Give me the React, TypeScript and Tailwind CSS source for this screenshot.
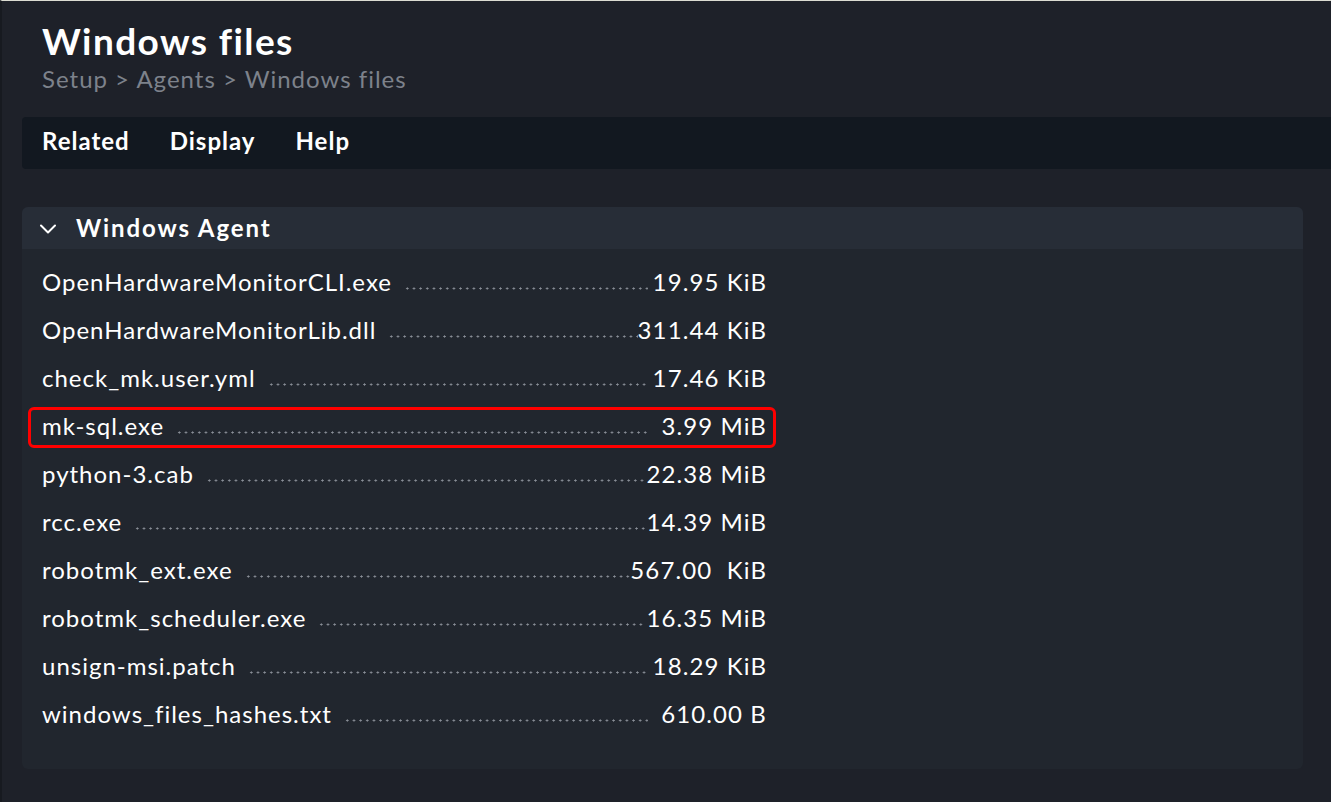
interface AgentFile {
  name: string;
  size: string;
  marked?: boolean;
}

const files: AgentFile[] = [
  { name: "OpenHardwareMonitorCLI.exe", size: "19.95 KiB" },
  { name: "OpenHardwareMonitorLib.dll", size: "311.44 KiB" },
  { name: "check_mk.user.yml", size: "17.46 KiB" },
  { name: "mk-sql.exe", size: "3.99 MiB", marked: true },
  { name: "python-3.cab", size: "22.38 MiB" },
  { name: "rcc.exe", size: "14.39 MiB" },
  { name: "robotmk_ext.exe", size: "567.00\u00a0 KiB" },
  { name: "robotmk_scheduler.exe", size: "16.35 MiB" },
  { name: "unsign-msi.patch", size: "18.29 KiB" },
  { name: "windows_files_hashes.txt", size: "610.00 B" },
];

function FileRow({ file }: { file: AgentFile }) {
  return (
    <div className="relative flex h-12 items-center">
      <span className="whitespace-nowrap">{file.name}</span>
      <span className="ml-3 h-[3px] flex-1 self-center translate-y-[6px] bg-[radial-gradient(circle,#8b9099_0.9px,transparent_1.2px)] bg-[length:6.67px_3px] bg-repeat-x" />
      <span className="min-w-[119px] whitespace-pre text-right tracking-[1.1px]">{file.size}</span>
      {file.marked && (
        <span className="pointer-events-none absolute -left-[14px] -right-[9px] top-[5px] bottom-[2px] rounded-[6px] border-[3px] border-[#ff0000]" />
      )}
    </div>
  );
}

export default function App() {
  return (
    <div className="min-h-[802px] border-t border-l-2 border-t-[#dcdcd2] border-l-[#171a20] bg-[#1e2129] font-['Lato','Liberation_Sans',sans-serif] text-white">
      <div className="pl-[20px] pt-[18px]">
        <div className="px-5">
          <h1 className="text-[37px] font-bold leading-[44px] tracking-[1.4px]">Windows files</h1>
          <div className="text-[24px] leading-[32px] tracking-[1px] text-[#7d828b]">
            Setup &gt; Agents &gt; Windows files
          </div>
        </div>

        <div className="mt-[22px] flex h-[52px] items-center gap-[40px] rounded-l-[4px] bg-[#121820] px-5 pb-1 text-[24px] font-bold tracking-[1px]">
          <span>Related</span>
          <span>Display</span>
          <span>Help</span>
        </div>

        <div className="mr-[28px] mt-[38px] rounded-[6px] bg-[#21262e] pb-[31px]">
          <div className="flex h-[42px] items-center rounded-t-[6px] bg-[#272d37] pl-[18px] text-[24px] font-bold tracking-[1.9px]">
            <svg width="16" height="10" viewBox="0 0 16 10" fill="none" className="mt-[2px]">
              <path d="M1 1.5 L8 8.5 L15 1.5" stroke="white" strokeWidth="2" strokeLinecap="round" strokeLinejoin="round" />
            </svg>
            <span className="ml-[20px]">Windows Agent</span>
          </div>
          <div className="mt-[9px] w-[745px] pl-5 text-[24px] tracking-[1px]">
            {files.map((f) => (
              <FileRow key={f.name} file={f} />
            ))}
          </div>
        </div>
      </div>
    </div>
  );
}
